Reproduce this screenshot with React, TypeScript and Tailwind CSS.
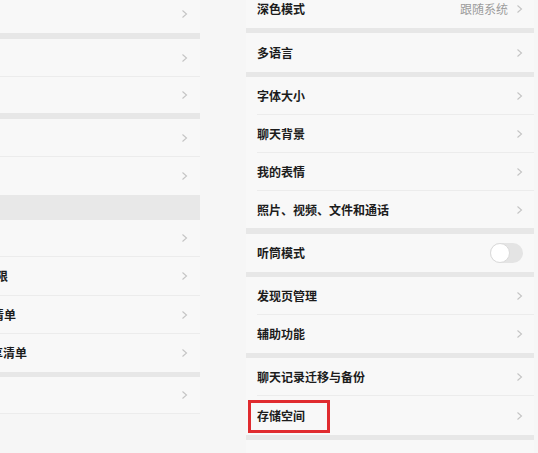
import React from "react"

const font = { fontFamily: '"Noto Sans CJK SC", "Noto Sans", sans-serif' }

const Chevron = () => (
  <svg width="7" height="10" viewBox="0 0 7 10" className="shrink-0">
    <polyline points="1.5,1.5 5.5,5 1.5,8.5" fill="none" stroke="#c4c4c4" strokeWidth="1.1" />
  </svg>
)

const Sep = ({ h = "h-[5px]" }: { h?: string }) => <div className={`${h} bg-[#e7e7e7]`} />

type RowProps = {
  label?: string
  value?: string
  height: string
  line?: boolean
  inset?: boolean
  textClass?: string
  right?: React.ReactNode
  children?: React.ReactNode
}

const Row = ({ label, value, height, line, inset = true, textClass = "", right, children }: RowProps) => (
  <div className={`relative ${height} flex flex-col bg-[#f8f8f8]`}>
    <div className={`flex flex-1 items-center justify-between ${inset ? "pl-[11px] pr-[11px]" : "pr-[12px]"}`}>
      <span className={`whitespace-nowrap text-[12px] font-semibold text-[#1c1c1c] ${textClass}`}>{label}</span>
      <div className="flex items-center gap-[8px]">
        {value && <span className="text-[12px] text-[#9c9c9c]">{value}</span>}
        {right ?? <Chevron />}
      </div>
    </div>
    {line && <div className={`h-px bg-[#ececec] ${inset ? "ml-[11px]" : ""}`} />}
    {children}
  </div>
)

const Toggle = () => (
  <div className="relative h-[20px] w-[33px] rounded-full bg-[#e4e4e4]">
    <div className="absolute left-0 top-0 h-[20px] w-[20px] rounded-full border border-[#dadada] bg-white" />
  </div>
)

const LeftPanel = () => (
  <div className="mt-[-5px] w-[200px] shrink-0 overflow-hidden">
    <Row height="h-[38px]" inset={false} />
    <Sep h="h-[6px]" />
    <Row height="h-[38px]" inset={false} line />
    <Row height="h-[36px]" inset={false} />
    <Sep h="h-[6px]" />
    <Row height="h-[38px]" inset={false} line />
    <Row height="h-[38px]" inset={false} />
    <div className="h-[25px] bg-[#e8e8e8]" />
    <Row height="h-[37px]" inset={false} line />
    <Row height="h-[39px]" inset={false} line label="权限" textClass="ml-[-16px]" />
    <Row height="h-[38px]" inset={false} line label="收集清单" textClass="ml-[-32px]" />
    <Row height="h-[38px]" inset={false} label="共享清单" textClass="ml-[-21px]" />
    <Sep />
    <Row height="h-[37px]" inset={false} line />
  </div>
)

const RightPanel = () => (
  <div className="mt-[-10px] w-[288px] shrink-0">
    <Row height="h-[38px]" label="深色模式" value="跟随系统" />
    <Sep />
    <Row height="h-[39px]" label="多语言" />
    <Sep />
    <Row height="h-[38px]" label="字体大小" line />
    <Row height="h-[38px]" label="聊天背景" line />
    <Row height="h-[38px]" label="我的表情" line />
    <Row height="h-[37px]" label="照片、视频、文件和通话" />
    <Sep h="h-[6px]" />
    <Row height="h-[38px]" label="听筒模式" right={<Toggle />} />
    <Sep />
    <Row height="h-[38px]" label="发现页管理" line />
    <Row height="h-[38px]" label="辅助功能" />
    <Sep />
    <Row height="h-[38px]" label="聊天记录迁移与备份" line />
    <Row height="h-[39px]" label="存储空间">
      <div className="absolute left-[2px] top-[4px] h-[33px] w-[82px] border-[3px] border-[#e02b2f]" />
    </Row>
    <Sep />
    <div className="h-[38px] bg-[#f8f8f8] pl-[11px] pt-[9px]">
      <span className="whitespace-nowrap text-[12px] font-semibold text-[#c8c8c8]">清空聊天记录</span>
    </div>
  </div>
)

export default function App() {
  return (
    <div style={font} className="flex h-[453px] w-[538px] gap-[46px] overflow-hidden bg-[#f6f6f6]">
      <LeftPanel />
      <RightPanel />
    </div>
  )
}
